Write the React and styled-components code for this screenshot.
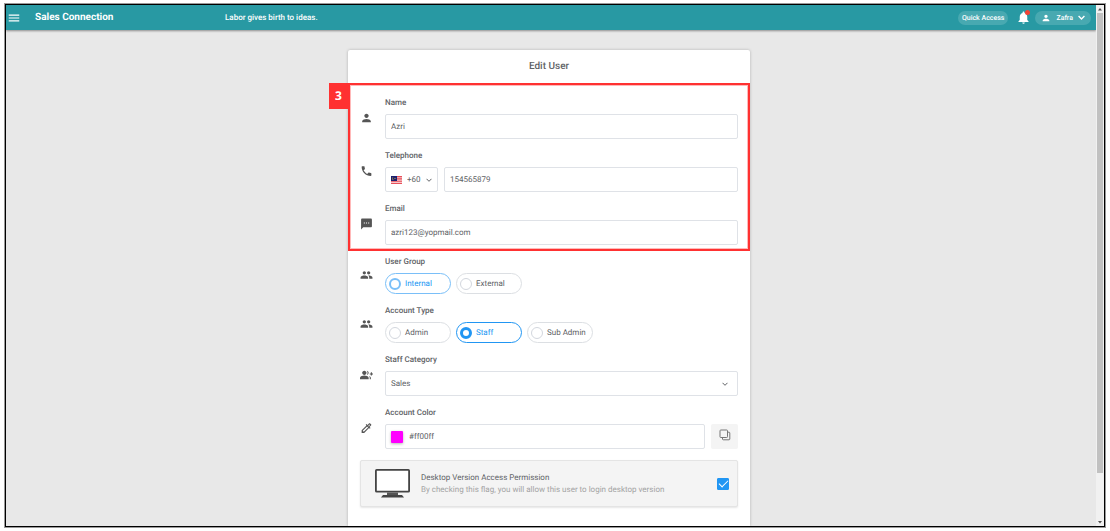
import { useState } from "react";
import styled, { createGlobalStyle } from "styled-components";
import {
  MdGroupAdd,
  MdMenu,
  MdNotifications,
  MdOutlineColorize,
  MdPeople,
  MdPerson,
  MdPhone,
  MdTextsms,
} from "react-icons/md";

const GlobalStyle = createGlobalStyle`
  * {
    box-sizing: border-box;
  }
  body {
    margin: 0;
    background: #fff;
    color: #606266;
    font-family: Roboto, "Liberation Sans", sans-serif;
    font-size: 8px;
    line-height: 12px;
    text-rendering: geometricPrecision;
  }
  button, input, select {
    margin: 0;
    padding: 0;
    font: inherit;
    color: inherit;
    text-rendering: inherit;
  }
`;

const Page = styled.div`
  display: flex;
  height: 100vh;
  padding: 4px 5px;
`;

const Frame = styled.div`
  flex: 1;
  display: flex;
  min-width: 0;
  overflow: hidden;
  border: 1px solid #000;
  box-shadow: 0 0 0 1px #999;
  background: #e8e8e8;
`;

const Screen = styled.div`
  flex: 1;
  display: flex;
  flex-direction: column;
  min-width: 0;
`;

const TopBar = styled.header`
  flex: none;
  display: flex;
  align-items: center;
  height: 25px;
  padding: 0 5px 0 1px;
  background: #2899a3;
  color: #fff;
  box-shadow: 0 1px 2px rgba(0, 0, 0, 0.4);
`;

const IconButton = styled.button`
  position: relative;
  display: flex;
  border: none;
  background: none;
  color: #fff;
  cursor: pointer;
`;

const Brand = styled.a`
  width: 190px;
  margin-left: 14px;
  color: #fff;
  font-size: 10px;
  font-weight: 700;
  text-decoration: none;
`;

const Slogan = styled.span`
  font-weight: 500;
`;

const TopActions = styled.div`
  display: flex;
  align-items: center;
  gap: 4px;
  margin-left: auto;
`;

const TopPill = styled.button`
  display: flex;
  align-items: center;
  gap: 5px;
  height: 14px;
  margin-right: ${(p) => (p.$wide ? 0 : 4)}px;
  padding: 0 ${(p) => (p.$wide ? 6 : 4)}px;
  border: none;
  border-radius: 7px;
  background: #48a9b1;
  color: #fff;
  font-size: 7px;
  font-weight: 500;
  cursor: pointer;
`;

const AlertDot = styled.span`
  position: absolute;
  top: 0;
  right: 1px;
  width: 5px;
  height: 5px;
  border-radius: 50%;
  background: #f44336;
`;

const Scrollbar = styled.div`
  flex: none;
  display: flex;
  flex-direction: column;
  align-items: center;
  width: 8px;
  background: #f1f1f1;
  color: #505050;
`;

const ScrollArrow = styled.svg`
  flex: none;
  width: 6px;
  height: 8px;
`;

const ScrollTrack = styled.div`
  flex: 1;
  width: 6px;
`;

const ScrollThumb = styled.div`
  height: 91%;
  background: #c1c1c1;
`;

const Main = styled.main`
  flex: 1;
  display: flex;
  justify-content: center;
  min-height: 0;
  padding: 20px 4px 0 0;
`;

const Card = styled.form`
  width: 100%;
  max-width: 402px;
  border-radius: 2px 2px 0 0;
  background: #fff;
  box-shadow: 0 0 3px rgba(0, 0, 0, 0.25);
`;

const Title = styled.h1`
  margin: 0;
  height: 33px;
  font-size: 10px;
  font-weight: 500;
  line-height: 34px;
  text-align: center;
`;

const Fields = styled.div`
  position: relative;
  display: flex;
  flex-direction: column;
  gap: 9px;
  padding: ${(p) => (p.$marked ? "12px 12px 6px" : "3px 12px 11px")};
  box-shadow: ${(p) => (p.$marked ? "inset 0 0 0 2px #ff3131, inset 0 0 0 3px #ffb9b9" : "none")};
`;

const Marker = styled.span`
  position: absolute;
  top: 0;
  right: 100%;
  width: 19px;
  background: #ff3131;
  color: #fff;
  font-family: "Open Sans", sans-serif;
  font-size: 12px;
  font-weight: 700;
  line-height: 26px;
  text-align: center;
`;

const Row = styled.div`
  display: grid;
  grid-template-columns: 13px 1fr;
  align-items: center;
  column-gap: 12px;
`;

const RowIcon = styled.span`
  display: flex;
  justify-content: center;
  padding-top: 2px;
  color: #555;
`;

const RowBody = styled.div`
  display: flex;
  flex-direction: column;
  gap: 3px;
  min-width: 0;
`;

const labelStyle = `
  font-weight: 500;
  line-height: 16px;
`;

const Label = styled.label`
  ${labelStyle}
`;

const GroupLabel = styled.span`
  ${labelStyle}
`;

const Line = styled.div`
  display: flex;
  gap: ${(p) => p.$gap || 6}px;
`;

const boxStyle = `
  height: 25px;
  border: 1px solid #dfe2e7;
  border-radius: 2px;
  background: #fff;
`;

const TextInput = styled.input`
  ${boxStyle}
  flex: 1;
  min-width: 0;
  padding: 0 5px;
`;

const Box = styled.div`
  ${boxStyle}
  flex: ${(p) => (p.$width ? "none" : 1)};
  display: flex;
  align-items: center;
  gap: ${(p) => p.$gap || 5}px;
  width: ${(p) => (p.$width ? `${p.$width}px` : "auto")};
  padding: 0 ${(p) => p.$right || 5}px 0 5px;
`;

const BareSelect = styled.select`
  flex: 1;
  min-width: 0;
  border: none;
  outline: none;
  appearance: none;
  background: none;
`;

const BareInput = styled.input`
  flex: 1;
  min-width: 0;
  border: none;
  outline: none;
  background: none;
`;

const Swatch = styled.span`
  width: 12px;
  height: 12px;
  border-radius: 1px;
  box-shadow: 0 1px 3px rgba(0, 0, 0, 0.3);
`;

const CopyButton = styled.button`
  display: flex;
  align-items: center;
  justify-content: center;
  width: 27px;
  padding-bottom: 3px;
  border: none;
  border-radius: 2px;
  background: #f4f4f4;
  cursor: pointer;
`;

const Pill = styled.label`
  display: flex;
  align-items: center;
  gap: 4px;
  width: 66px;
  height: 21px;
  padding-left: 3px;
  border: 1px solid #dcdfe3;
  border-radius: 11px;
  cursor: pointer;
  &:has(input:checked) {
    border-color: #2196f3;
    color: #2196f3;
  }
  &:has(input:disabled:checked) {
    border-color: #7abff8;
  }
`;

const Radio = styled.input`
  flex: none;
  width: 12px;
  height: 12px;
  border: 1px solid #d3d7de;
  border-radius: 50%;
  appearance: none;
  background: #fff;
  &:checked {
    border: 3px solid #2196f3;
  }
  &:disabled:checked {
    border: 2px solid #7abff8;
  }
`;

const Permission = styled.div`
  display: flex;
  align-items: center;
  height: 47px;
  margin: 0 12px;
  padding: 0 8px 0 14px;
  border: 1px solid #e4e4e4;
  border-radius: 2px;
  background: #f4f4f4;
  box-shadow: 0 1px 2px rgba(0, 0, 0, 0.1);
`;

const PermissionText = styled.label`
  flex: 1;
  margin-left: 11px;
`;

const PermissionHint = styled.span`
  display: block;
  color: #a3a3a3;
`;

const Checkbox = styled.input`
  display: flex;
  align-items: center;
  justify-content: center;
  width: 12px;
  height: 12px;
  border-radius: 1px;
  appearance: none;
  border: 1px solid #c0c4cc;
  background: #fff;
  &:checked {
    border-color: #2196f3;
    background: #2196f3;
  }
  &:checked::after {
    content: "";
    width: 8px;
    height: 4px;
    margin-bottom: 2px;
    border: solid #fff;
    border-width: 0 0 1px 1px;
    transform: rotate(-45deg);
  }
`;

const Chevron = ({ size = 6, weight = 1 }) => (
  <svg width={size} height={size} viewBox="0 0 6 6" fill="none" stroke="currentColor" strokeWidth={weight} aria-hidden="true">
    <path d="M0.5 1.8 3 4.3 5.5 1.8" />
  </svg>
);

const MalaysiaFlag = () => (
  <svg width="11" height="8" viewBox="0 0 22 16" aria-hidden="true">
    <rect width="22" height="16" fill="#f7c6c9" />
    <path d="M0 1.2h22M0 5.8h22M0 10.4h22M0 15h22" stroke="#e8505b" strokeWidth="2.2" />
    <rect width="12" height="10" fill="#1b1f70" />
    <path d="M6 2.2a2.8 2.8 0 1 0 0 5.2 2.3 2.3 0 1 1 0-5.2Z" fill="#b9a04a" />
    <circle cx="8" cy="4.8" r="1.3" fill="#b9a04a" />
  </svg>
);

const CopyIcon = () => (
  <svg width="12" height="12" viewBox="0 0 12 12" fill="none" stroke="#777" aria-hidden="true">
    <rect x="1" y="1" width="7.5" height="7.5" rx="0.8" />
    <path d="M8.5 3.2H10a.8.8 0 0 1 .8.8v6a.8.8 0 0 1-.8.8H4.3a.8.8 0 0 1-.8-.8V8.5" />
  </svg>
);

const Monitor = () => (
  <svg width="35" height="29" viewBox="0 0 35 29" aria-hidden="true">
    <rect x="0.9" y="0.9" width="33.2" height="21.8" rx="0.8" fill="#fff" stroke="#444" strokeWidth="1.8" />
    <path d="M12 23.5h11v3H12z" fill="#555" />
    <path d="M8 26h19l2 2.6H6z" fill="#444" />
  </svg>
);

const Field = ({ icon, label, id, group, children }) => (
  <Row role={group ? "radiogroup" : undefined} aria-labelledby={group ? id : undefined}>
    <RowIcon>{icon}</RowIcon>
    <RowBody>
      {group ? <GroupLabel id={id}>{label}</GroupLabel> : <Label htmlFor={id}>{label}</Label>}
      <Line $gap={group ? 5 : 6}>{children}</Line>
    </RowBody>
  </Row>
);

const App = () => {
  const [accountType, setAccountType] = useState("Staff");
  const [color, setColor] = useState("#ff00ff");

  return (
    <Page>
      <GlobalStyle />
      <Frame>
        <Screen>
          <TopBar>
            <IconButton type="button" aria-label="Menu">
              <MdMenu size={14} />
            </IconButton>
            <Brand href="#">Sales Connection</Brand>
            <Slogan>Labor gives birth to ideas.</Slogan>
            <TopActions>
              <TopPill type="button">Quick Access</TopPill>
              <IconButton type="button" aria-label="Notifications">
                <MdNotifications size={15} />
                <AlertDot />
              </IconButton>
              <TopPill type="button" $wide>
                <MdPerson size={10} />
                Zafra
                <Chevron size={7} weight={1.2} />
              </TopPill>
            </TopActions>
          </TopBar>
          <Main>
            <Card>
              <Title>Edit User</Title>
              <Fields $marked>
                <Marker>3</Marker>
                <Field icon={<MdPerson size={14} />} label="Name" id="name">
                  <TextInput id="name" defaultValue="Azri" />
                </Field>
                <Field icon={<MdPhone size={14} />} label="Telephone" id="phone">
                  <Box $width={53}>
                    <MalaysiaFlag />
                    <BareSelect aria-label="Country code">
                      <option>+60</option>
                    </BareSelect>
                    <Chevron />
                  </Box>
                  <TextInput id="phone" type="tel" defaultValue="154565879" />
                </Field>
                <Field icon={<MdTextsms size={14} />} label="Email" id="email">
                  <TextInput id="email" type="email" defaultValue="azri123@yopmail.com" />
                </Field>
              </Fields>
              <Fields>
                <Field icon={<MdPeople size={14} />} label="User Group" id="user-group" group>
                  <Pill>
                    <Radio type="radio" name="group" defaultChecked disabled />
                    Internal
                  </Pill>
                  <Pill>
                    <Radio type="radio" name="group" disabled />
                    External
                  </Pill>
                </Field>
                <Field icon={<MdPeople size={14} />} label="Account Type" id="account-type" group>
                  {["Admin", "Staff", "Sub Admin"].map((type) => (
                    <Pill key={type}>
                      <Radio
                        type="radio"
                        name="type"
                        checked={accountType === type}
                        onChange={() => setAccountType(type)}
                      />
                      {type}
                    </Pill>
                  ))}
                </Field>
                <Field icon={<MdGroupAdd size={16} />} label="Staff Category" id="category">
                  <Box $right={9}>
                    <BareSelect id="category">
                      <option>Sales</option>
                    </BareSelect>
                    <Chevron />
                  </Box>
                </Field>
                <Field icon={<MdOutlineColorize size={14} />} label="Account Color" id="color">
                  <Box $gap={6}>
                    <Swatch style={{ background: color }} />
                    <BareInput id="color" value={color} onChange={(e) => setColor(e.target.value)} />
                  </Box>
                  <CopyButton type="button" aria-label="Copy color">
                    <CopyIcon />
                  </CopyButton>
                </Field>
              </Fields>
              <Permission>
                <Monitor />
                <PermissionText htmlFor="desktop">
                  Desktop Version Access Permission
                  <PermissionHint>
                    By checking this flag, you will allow this user to login desktop version
                  </PermissionHint>
                </PermissionText>
                <Checkbox id="desktop" type="checkbox" defaultChecked />
              </Permission>
            </Card>
          </Main>
        </Screen>
        <Scrollbar aria-hidden="true">
          <ScrollArrow viewBox="0 0 6 8">
            <path d="M1 5.5h4L3 3z" fill="currentColor" />
          </ScrollArrow>
          <ScrollTrack>
            <ScrollThumb />
          </ScrollTrack>
          <ScrollArrow viewBox="0 0 6 8">
            <path d="M1 3h4L3 5.5z" fill="currentColor" />
          </ScrollArrow>
        </Scrollbar>
      </Frame>
    </Page>
  );
};

export default App;
